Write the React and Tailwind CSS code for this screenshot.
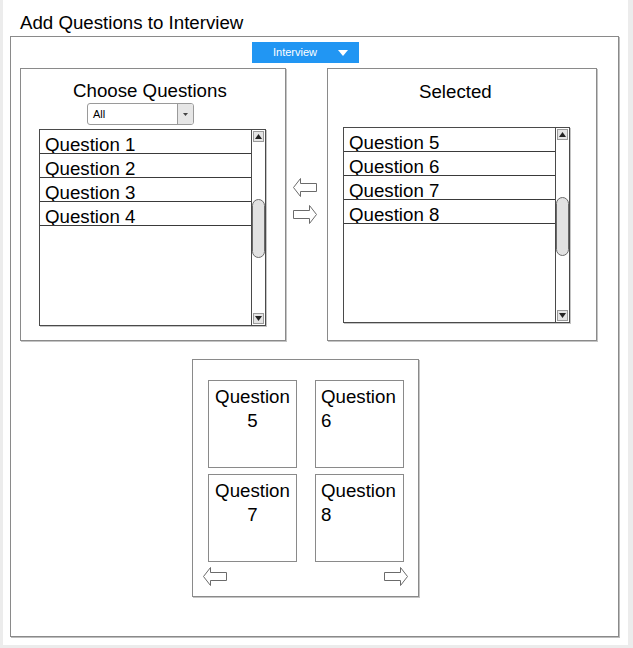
const font = "font-['Liberation_Sans',Arial,sans-serif]";

function BlockArrow({ dir = "right", className = "" }) {
  const d =
    dir === "right"
      ? "M0.5,5.5 H16.5 V0.5 L23.5,9.5 L16.5,18.5 V13.5 H0.5 Z"
      : "M23.5,5.5 H7.5 V0.5 L0.5,9.5 L7.5,18.5 V13.5 H23.5 Z";
  return (
    <svg width="24" height="19" viewBox="0 0 24 19" className={className}>
      <path d={d} fill="#fff" stroke="#6b6b6b" strokeWidth="1" />
    </svg>
  );
}

function Tri({ up }) {
  return (
    <svg width="7" height="5" viewBox="0 0 7 5">
      <path d={up ? "M0,5 L3.5,0 L7,5 Z" : "M0,0 L3.5,5 L7,0 Z"} fill="#222" />
    </svg>
  );
}

function ListBox({ items, height }) {
  return (
    <div
      className="flex w-[227px] border border-[#4a4a4a] shadow-[1px_1px_0_#c4c4c4] bg-white"
      style={{ height }}
    >
      <div className="flex-1 flex flex-col">
        {items.map((q) => (
          <div
            key={q}
            className="h-[24px] border-b border-[#3a3a3a] pl-[5px] pt-[5px] text-[18.7px] leading-[19px] text-black overflow-hidden"
          >
            {q}
          </div>
        ))}
      </div>
      <div className="w-[14px] border-l border-[#4a4a4a] flex flex-col items-center">
        <div className="w-[11px] h-[11px] mt-[1px] bg-[#e4e4e4] border border-[#9a9a9a] flex items-center justify-center">
          <Tri up />
        </div>
        <div className="w-[13px] h-[59px] mt-[57px] rounded-full bg-[#e2e2e2] border border-[#6a6a6a]" />
        <div className="flex-1" />
        <div className="w-[11px] h-[11px] mb-[1px] bg-[#e4e4e4] border border-[#9a9a9a] flex items-center justify-center">
          <Tri />
        </div>
      </div>
    </div>
  );
}

function Card({ children, left }) {
  return (
    <div
      className={`h-[88px] border border-[#8a8a8a] pt-[4px] text-[18.7px] leading-[24px] text-black ${
        left ? "pl-[5px] text-left" : "text-center"
      }`}
    >
      {children}
    </div>
  );
}

export default function App() {
  return (
    <div className={`min-h-[648px] bg-[#ececec] pl-[3px] ${font}`}>
      <div className="w-[625px] h-[645px] bg-white flex flex-col">
        <div className="h-[36px] pl-[17px] pt-[11px] text-[18.7px] leading-[24px] text-black">
          Add Questions to Interview
        </div>

        <div className="ml-[7px] w-[609px] h-[601px] border border-[#8a8a8a] shadow-[1px_1px_0_#bdbdbd] flex flex-col">
          {/* interview dropdown button */}
          <div className="pl-[241px] pt-[5px]">
            <div className="w-[107px] h-[21px] bg-[#2196f3] flex items-center pl-[21px] text-white text-[11px]">
              <span>Interview</span>
              <svg width="10" height="6" viewBox="0 0 10 6" className="ml-[21px]">
                <path d="M0,0 L10,0 L5,6 Z" fill="#fff" />
              </svg>
            </div>
          </div>

          {/* choose / selected */}
          <div className="flex pl-[9px] mt-[5px]">
            <div className="w-[266px] h-[273px] border border-[#8a8a8a] shadow-[1px_1px_0_#c4c4c4] flex flex-col">
              <div className="mt-[10px] pl-[52px] text-[18.7px] leading-[24px] text-black">
                Choose Questions
              </div>
              <div className="ml-[66px] w-[107px] h-[22px] border border-[#9a9a9a] rounded-[3px] flex overflow-hidden bg-white">
                <div className="flex-1 pl-[5px] text-[11px] leading-[20px] text-black">All</div>
                <div className="w-[16px] bg-[#e6e6e6] border-l border-[#9a9a9a] flex items-center justify-center">
                  <svg width="5" height="3" viewBox="0 0 5 3">
                    <path d="M0,0 L5,0 L2.5,3 Z" fill="#444" />
                  </svg>
                </div>
              </div>
              <div className="ml-[18px] mt-[4px]">
                <ListBox
                  items={["Question 1", "Question 2", "Question 3", "Question 4"]}
                  height={197}
                />
              </div>
            </div>

            <div className="w-[41px] flex flex-col pl-[7px] pt-[110px] gap-[8px]">
              <BlockArrow dir="left" />
              <BlockArrow dir="right" />
            </div>

            <div className="w-[270px] h-[273px] border border-[#8a8a8a] shadow-[1px_1px_0_#c4c4c4] flex flex-col">
              <div className="mt-[11px] pl-[91px] text-[18.7px] leading-[24px] text-black">
                Selected
              </div>
              <div className="ml-[15px] mt-[23px]">
                <ListBox
                  items={["Question 5", "Question 6", "Question 7", "Question 8"]}
                  height={196}
                />
              </div>
            </div>
          </div>

          {/* preview */}
          <div className="ml-[181px] mt-[18px] w-[227px] h-[238px] border border-[#8a8a8a] shadow-[1px_1px_0_#c4c4c4] flex flex-col">
            <div className="grid grid-cols-[89px_89px] gap-x-[18px] gap-y-[6px] pl-[15px] pt-[20px]">
              <Card>Question 5</Card>
              <Card left>Question 6</Card>
              <Card>Question 7</Card>
              <Card left>Question 8</Card>
            </div>
            <div className="flex justify-between px-[10px] mt-[5px]">
              <BlockArrow dir="left" />
              <BlockArrow dir="right" />
            </div>
          </div>
        </div>
      </div>
    </div>
  );
}
